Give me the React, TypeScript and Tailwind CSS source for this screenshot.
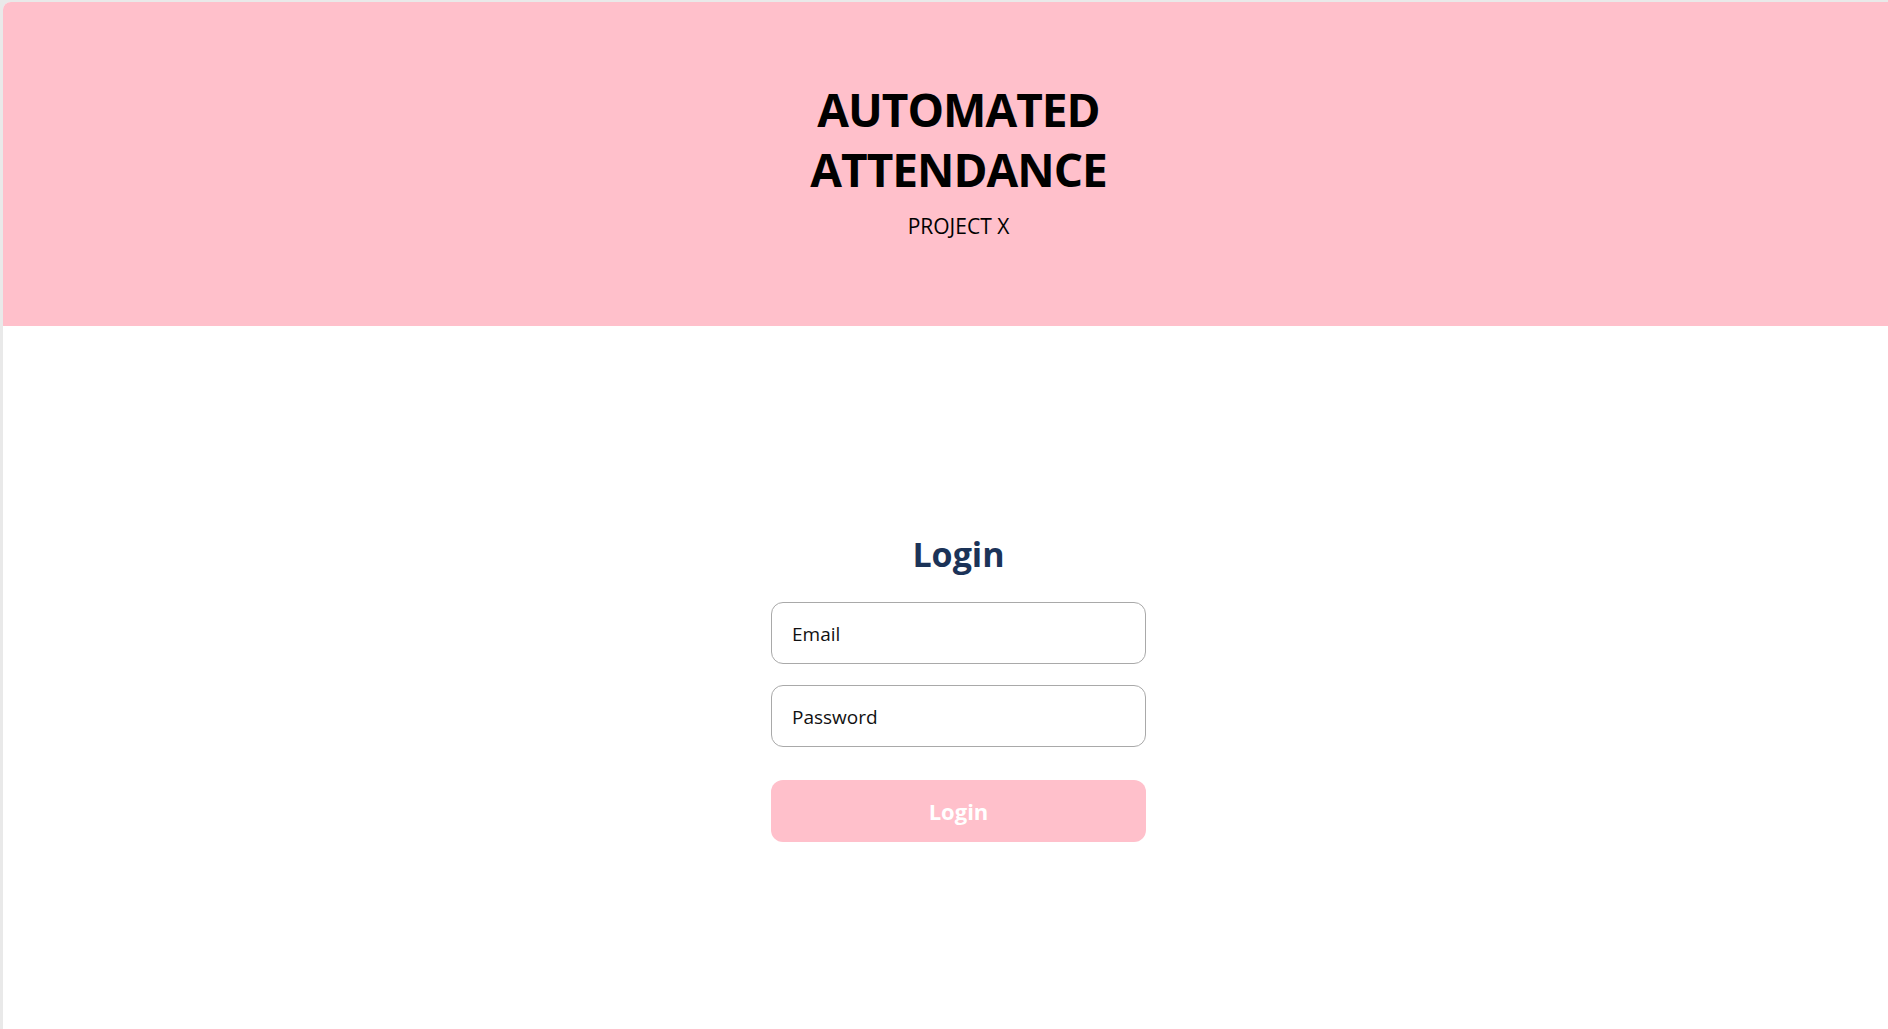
import React from 'react';

export default function App() {
  return (
    <div className="min-h-screen bg-[#e9e9e9] pl-[3px] pt-[2px] font-['Open_Sans',sans-serif]">
      <div className="flex min-h-[1027px] flex-col overflow-hidden rounded-tl-[8px] bg-white">
        <header className="flex h-[324px] flex-col items-center bg-[#ffc0cb] pl-[26px] pt-[77px] text-black">
          <h1 className="text-center text-[46px] font-bold leading-[60px] tracking-[-1px]">
            AUTOMATED
            <br />
            ATTENDANCE
          </h1>
          <p className="mt-[13px] text-[21px] leading-[28px]">PROJECT X</p>
        </header>

        <main className="flex flex-col items-center pl-[26px] pt-[208px]">
          <h2 className="text-[34px] font-bold leading-[40px] text-[#1b3358]">Login</h2>
          <form className="mt-[28px] flex w-[375px] flex-col" onSubmit={(e) => e.preventDefault()}>
            <input
              type="email"
              placeholder="Email"
              className="h-[62px] rounded-[12px] border border-[#a9a9a9] px-5 pt-[2px] text-[19px] text-black outline-none placeholder:text-[#111]"
            />
            <input
              type="password"
              placeholder="Password"
              className="mt-[21px] h-[62px] rounded-[12px] border border-[#a9a9a9] px-5 pt-[2px] text-[19px] text-black outline-none placeholder:text-[#111]"
            />
            <button
              type="submit"
              className="mt-[33px] h-[62px] rounded-[12px] bg-[#ffc0cb] text-[22px] font-bold text-white"
            >
              Login
            </button>
          </form>
        </main>
      </div>
    </div>
  );
}
